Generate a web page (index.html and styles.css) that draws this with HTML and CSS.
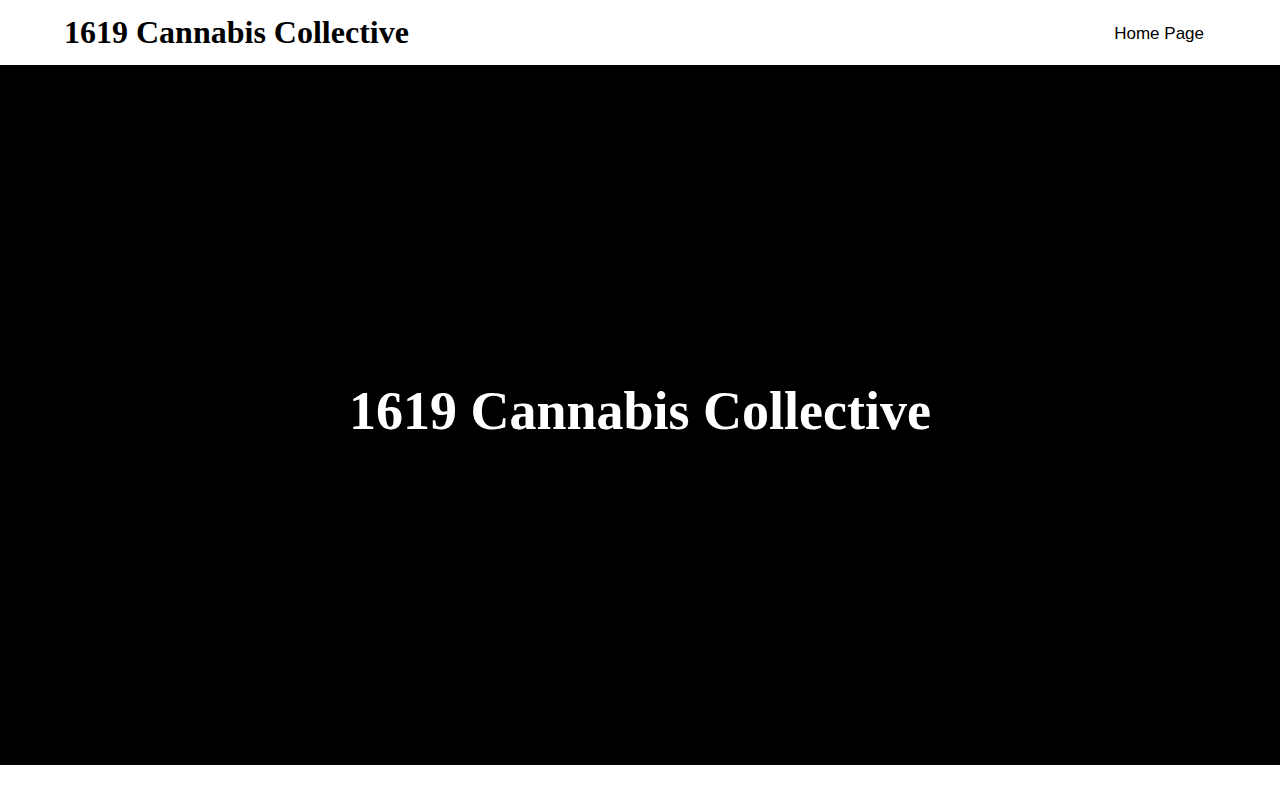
FILE: index.html
```html
<!DOCTYPE html>
<html lang="en">
<head>
<meta charset="utf-8">
<title>1619 Cannabis Collective</title>
<link rel="stylesheet" href="styles.css">
</head>
<body>
<header class="site-header">
  <h1 class="brand">1619 Cannabis Collective</h1>
  <nav class="nav"><a class="nav-link" href="#">Home Page</a></nav>
</header>
<section class="hero">
  <h2 class="hero-title">1619 Cannabis Collective</h2>
</section>
</body>
</html>
```

FILE: styles.css
```css
html, body {
  margin: 0;
  padding: 0;
  background: #fff;
}
.site-header {
  height: 65px;
  display: flex;
  align-items: center;
  justify-content: space-between;
  padding: 0 76px 0 64px;
  box-sizing: border-box;
}
.brand {
  margin: 0;
  font-family: "Liberation Serif", "Times New Roman", serif;
  font-weight: bold;
  font-size: 32px;
  color: #000;
}
.nav {
  padding-top: 2px;
}
.nav-link {
  font-family: "Liberation Sans", Arial, sans-serif;
  font-size: 17px;
  color: #000;
  text-decoration: none;
}
.hero {
  height: 700px;
  box-sizing: border-box;
  padding-bottom: 8px;
  background: #000;
  display: flex;
  align-items: center;
  justify-content: center;
}
.hero-title {
  margin: 0;
  color: #fff;
  font-family: "Liberation Serif", "Times New Roman", serif;
  font-weight: bold;
  font-size: 54px;
}
```
